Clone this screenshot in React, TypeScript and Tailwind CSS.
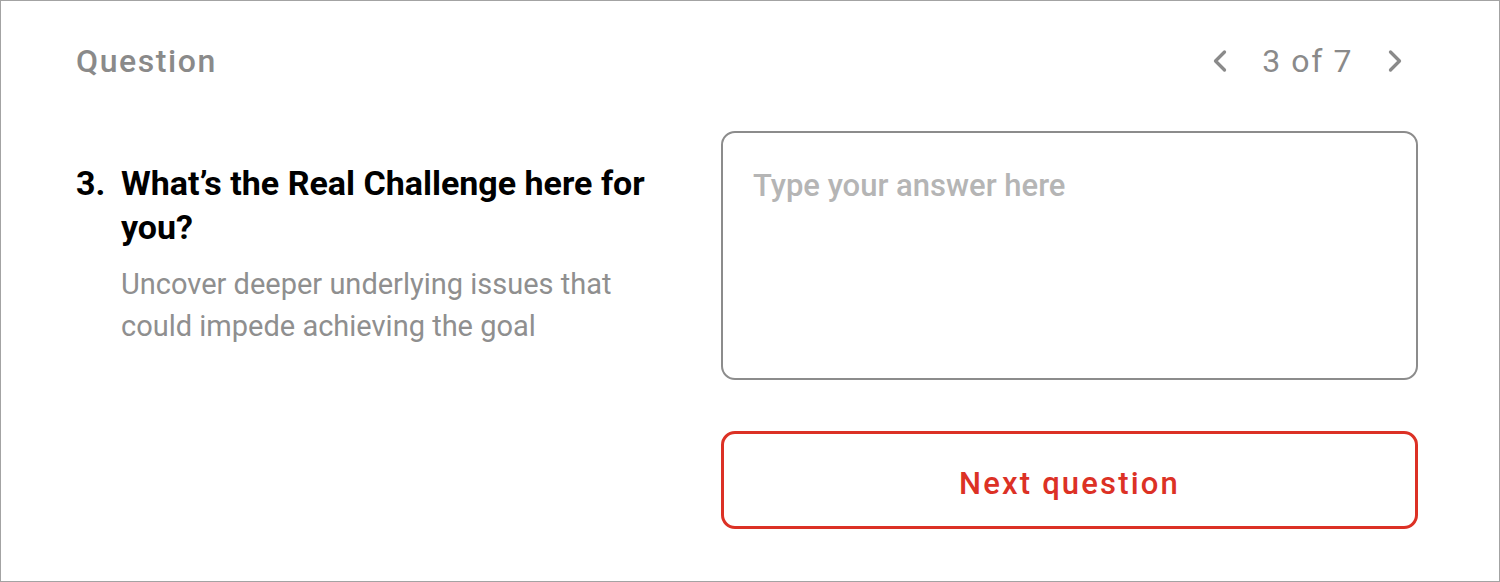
import { ChevronLeft, ChevronRight } from 'lucide-react';

const font = { fontFamily: 'Roboto, "Liberation Sans", sans-serif' };

const QuestionCard = () => {
  return (
    <div className="h-[582px] w-[1500px] border border-[#a3a3a3] bg-white" style={font}>
      <div className="flex items-center justify-between pl-[75px] pr-[86px] pt-[36px]">
        <h1 className="text-[32px] font-medium tracking-[0.05em] text-[#8a8a8a]">Question</h1>
        <div className="flex items-center gap-[24px] text-[#8a8a8a]">
          <ChevronLeft size={36} strokeWidth={2.2} />
          <span className="text-[32px] tracking-[0.05em]">3 of 7</span>
          <ChevronRight size={36} strokeWidth={2.2} />
        </div>
      </div>

      <div className="mt-[46px] flex gap-[60px] pl-[75px] pr-[81px]">
        <div className="flex-1 pt-[30px]">
          <div className="flex text-[34px] font-bold leading-[44px] text-black">
            <span className="w-[45px] shrink-0">3.</span>
            <span>What’s the Real Challenge here for you?</span>
          </div>
          <p className="mt-[14px] pl-[45px] text-[29px] leading-[42px] text-[#8f8f8f]">
            Uncover deeper underlying issues that could impede achieving the goal
          </p>
        </div>

        <div className="flex w-[697px] shrink-0 flex-col gap-[51px]">
          <textarea
            placeholder="Type your answer here"
            className="h-[249px] w-full resize-none rounded-[14px] border-2 border-[#8c8c8c] px-[30px] py-[33px] text-[31px] font-medium leading-[40px] outline-none placeholder:text-[#b5b5b5]"
          />
          <button className="h-[98px] w-full rounded-[14px] border-[3px] border-[#dc3125] pt-[8px] text-[31px] font-medium tracking-[0.07em] text-[#dc3125]">
            Next question
          </button>
        </div>
      </div>
    </div>
  );
};

export default function App() {
  return <QuestionCard />;
}
